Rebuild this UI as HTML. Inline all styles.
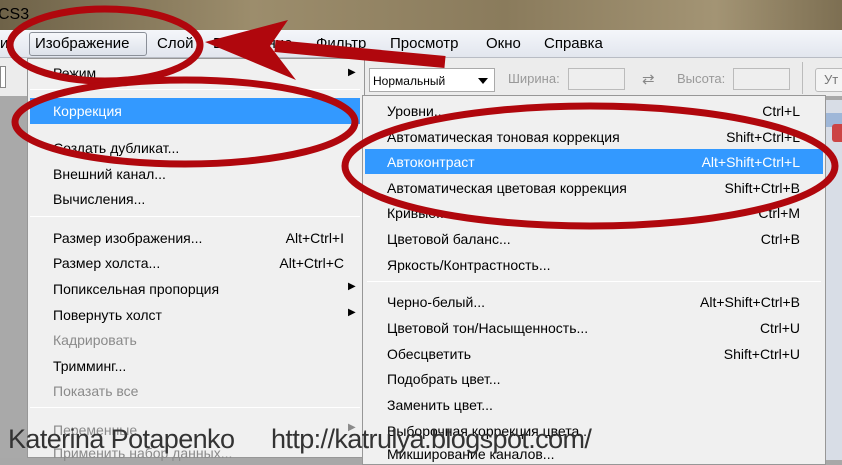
<!DOCTYPE html>
<html><head><meta charset="utf-8"><style>
*{margin:0;padding:0;box-sizing:border-box}
body{width:842px;height:457px;overflow:hidden;position:relative;font-family:"Liberation Sans",sans-serif;font-size:14px;color:#000;background:#a8a8a8}
.a{position:absolute;white-space:nowrap}
.title{left:0;top:0;width:842px;height:30px;background:linear-gradient(90deg,#6e6248,#9c8d6c 30%,#8a7b5c 60%,#a39474 85%,#7d6f52)}
.menubar{left:0;top:30px;width:842px;height:28px;background:linear-gradient(#f4f6fa,#e2e6ee);border-bottom:1px solid #b8bcc4}
.tool{left:0;top:58px;width:842px;height:38px;background:#ececec}
.m1{left:27px;top:58px;width:338px;height:400px;background:#f0f0f0;border:1px solid #979797}
.m2{left:362px;top:95px;width:464px;height:370px;background:#f0f0f0;border:1px solid #979797}
.sep{position:absolute;height:1px;background:#c8c8c8;border-bottom:1px solid #fff}
.hl{position:absolute;background:#3399ff}
.g{color:#8a8a8a}
.r{text-align:right}
</style></head><body>
<div class="a title"></div>
<div class="a" style="left:-2px;top:6px;font-size:16px;color:#000">CS3</div>
<div class="a menubar"></div>
<div class="a" style="left:29px;top:32px;width:118px;height:24px;border:1px solid #8a8f98;border-radius:3px;background:linear-gradient(#f6f8fb,#dde2ea)"></div>
<div class="a" style="top:35px;left:0;font-size:15px">и</div>
<div class="a" style="top:35px;left:35px;font-size:15px">Изображение</div>
<div class="a" style="top:35px;left:157px;font-size:15px">Слой</div>
<div class="a" style="top:35px;left:213px;font-size:15px">Выделение</div>
<div class="a" style="top:35px;left:316px;font-size:15px">Фильтр</div>
<div class="a" style="top:35px;left:390px;font-size:15px">Просмотр</div>
<div class="a" style="top:35px;left:486px;font-size:15px">Окно</div>
<div class="a" style="top:35px;left:544px;font-size:15px">Справка</div>
<div class="a tool"></div>
<div class="a" style="left:0;top:66px;width:6px;height:22px;border:1px solid #888;background:#fff"></div>
<div class="a" style="left:0;top:96px;width:27px;height:362px;background:#a9a9a9"></div>
<div class="a" style="left:369px;top:68px;width:126px;height:24px;background:#fff;border:1px solid #aaa"></div>
<div class="a" style="left:373px;top:74px;font-size:12px">Нормальный</div>
<div class="a" style="left:478px;top:78px;width:0;height:0;border-left:5px solid transparent;border-right:5px solid transparent;border-top:6px solid #000"></div>
<div class="a" style="left:508px;top:71px;font-size:13px;color:#999">Ширина:</div>
<div class="a" style="left:568px;top:68px;width:57px;height:22px;border:1px solid #bbb;background:#eee"></div>
<div class="a" style="left:642px;top:70px;font-size:15px;color:#888">⇄</div>
<div class="a" style="left:677px;top:71px;font-size:13px;color:#999">Высота:</div>
<div class="a" style="left:733px;top:68px;width:57px;height:22px;border:1px solid #bbb;background:#eee"></div>
<div class="a" style="left:802px;top:62px;width:1px;height:32px;background:#bbb"></div>
<div class="a" style="left:815px;top:68px;width:40px;height:24px;border:1px solid #bbb;border-radius:3px;background:#f4f4f4"></div>
<div class="a" style="left:824px;top:72px;font-size:13px;color:#777">Ут</div>
<div class="a" style="left:826px;top:100px;width:16px;height:360px;background:#d8dde6"></div>
<div class="a" style="left:826px;top:113px;width:16px;height:14px;background:#9fb7d8"></div>
<div class="a" style="left:832px;top:124px;width:14px;height:18px;background:#c44;border-radius:3px"></div>

<div class="a m1">
<div class="a" style="left:25px;top:6px">Режим</div><div class="a" style="left:320px;top:8px;font-size:10px">▶</div>
<div class="sep" style="left:2px;right:4px;top:30px"></div>
<div class="hl" style="left:2px;right:4px;top:39px;height:26px"></div>
<div class="a" style="left:25px;top:44px;color:#fff">Коррекция</div>
<div class="a" style="left:25px;top:81px">Создать дубликат...</div>
<div class="a" style="left:25px;top:107px">Внешний канал...</div>
<div class="a" style="left:25px;top:132px">Вычисления...</div>
<div class="sep" style="left:2px;right:4px;top:157px"></div>
<div class="a" style="left:25px;top:171px">Размер изображения...</div><div class="a r" style="right:20px;top:171px">Alt+Ctrl+I</div>
<div class="a" style="left:25px;top:196px">Размер холста...</div><div class="a r" style="right:20px;top:196px">Alt+Ctrl+C</div>
<div class="a" style="left:25px;top:222px">Попиксельная пропорция</div><div class="a" style="left:320px;top:222px;font-size:10px">▶</div>
<div class="a" style="left:25px;top:248px">Повернуть холст</div><div class="a" style="left:320px;top:248px;font-size:10px">▶</div>
<div class="a g" style="left:25px;top:273px">Кадрировать</div>
<div class="a" style="left:25px;top:299px">Тримминг...</div>
<div class="a g" style="left:25px;top:324px">Показать все</div>
<div class="sep" style="left:2px;right:4px;top:348px"></div>
<div class="a g" style="left:25px;top:363px">Переменные</div><div class="a g" style="left:320px;top:363px;font-size:10px">▶</div>
<div class="a g" style="left:25px;top:386px">Применить набор данных...</div>
</div>

<div class="a m2">
<div class="a" style="left:24px;top:7px">Уровни...</div><div class="a r" style="right:25px;top:7px">Ctrl+L</div>
<div class="a" style="left:24px;top:33px">Автоматическая тоновая коррекция</div><div class="a r" style="right:25px;top:33px">Shift+Ctrl+L</div>
<div class="hl" style="left:2px;right:2px;top:53px;height:25px"></div>
<div class="a" style="left:24px;top:58px;color:#fff">Автоконтраст</div><div class="a r" style="right:25px;top:58px;color:#fff">Alt+Shift+Ctrl+L</div>
<div class="a" style="left:24px;top:84px">Автоматическая цветовая коррекция</div><div class="a r" style="right:25px;top:84px">Shift+Ctrl+B</div>
<div class="a" style="left:24px;top:109px">Кривые...</div><div class="a r" style="right:25px;top:109px">Ctrl+M</div>
<div class="a" style="left:24px;top:135px">Цветовой баланс...</div><div class="a r" style="right:25px;top:135px">Ctrl+B</div>
<div class="a" style="left:24px;top:161px">Яркость/Контрастность...</div>
<div class="sep" style="left:4px;right:4px;top:185px"></div>
<div class="a" style="left:24px;top:198px">Черно-белый...</div><div class="a r" style="right:25px;top:198px">Alt+Shift+Ctrl+B</div>
<div class="a" style="left:24px;top:224px">Цветовой тон/Насыщенность...</div><div class="a r" style="right:25px;top:224px">Ctrl+U</div>
<div class="a" style="left:24px;top:250px">Обесцветить</div><div class="a r" style="right:25px;top:250px">Shift+Ctrl+U</div>
<div class="a" style="left:24px;top:275px">Подобрать цвет...</div>
<div class="a" style="left:24px;top:301px">Заменить цвет...</div>
<div class="a" style="left:24px;top:327px">Выборочная коррекция цвета...</div>
<div class="a" style="left:24px;top:350px">Микширование каналов...</div>
</div>

<svg class="a" style="left:0;top:0" width="842" height="457">
<g fill="none" stroke="#b0070d" stroke-width="7">
<ellipse cx="105" cy="45" rx="95" ry="36"/>
<ellipse cx="185" cy="122" rx="170" ry="42"/>
<ellipse cx="590" cy="166" rx="245" ry="60"/>
</g>
<path d="M445 62 L275 46" stroke="#b0070d" stroke-width="12"/>
<path d="M205 42 L288 20 L270 46 L296 80 Z" fill="#b0070d"/>
</svg>
<div class="a" style="left:8px;top:424px;font-size:27px;color:#333;letter-spacing:-0.6px">Katerina Potapenko</div>
<div class="a" style="left:271px;top:424px;font-size:27px;color:#333;letter-spacing:-0.6px">http://katrulya.blogspot.com/</div>
</body></html>
